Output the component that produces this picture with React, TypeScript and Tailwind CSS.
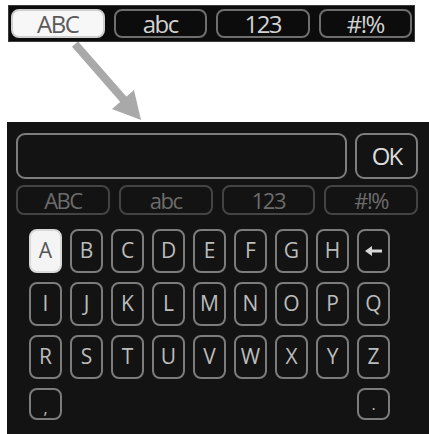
import React from 'react'

const font = { fontFamily: '"Open Sans", "DejaVu Sans", sans-serif' }

const rows: string[][] = [
  ['A', 'B', 'C', 'D', 'E', 'F', 'G', 'H', '←'],
  ['I', 'J', 'K', 'L', 'M', 'N', 'O', 'P', 'Q'],
  ['R', 'S', 'T', 'U', 'V', 'W', 'X', 'Y', 'Z'],
]

const modes = ['ABC', 'abc', '123', '#!%']

const Key: React.FC<{ label: string; active?: boolean }> = ({ label, active }) => {
  if (active) {
    return (
      <div className="h-[44px] rounded-[8px] bg-[#f4f4f4] border-2 border-[#d8d8d8] flex items-center justify-center text-[21px] text-[#555]">
        {label}
      </div>
    )
  }
  if (label === '←') {
    return (
      <div className="h-[44px] rounded-[8px] border-2 border-[#7c7c7c] flex items-center justify-center">
        <svg width="18" height="10" viewBox="0 0 18 10">
          <path d="M0 5 L7 0 L7 3.6 L17 3.6 L17 6.4 L7 6.4 L7 10 Z" fill="#d8d8d8" />
        </svg>
      </div>
    )
  }
  return (
    <div className="h-[44px] rounded-[8px] border-2 border-[#7c7c7c] flex items-center justify-center text-[21px] text-[#bcbcbc]">
      {label}
    </div>
  )
}

export default function App() {
  return (
    <div className="w-[429px] h-[434px] bg-white flex flex-col overflow-hidden" style={font}>
      {/* top mode bar */}
      <div className="ml-[8px] mt-[5px] w-[407px] h-[37px] bg-[#0c0c0c] border border-[#3a3a3a] px-[2px] pt-[3px] grid grid-cols-4 gap-x-[9px]">
        {modes.map((m, i) => (
          <div
            key={m}
            className={
              i === 0
                ? 'h-[29px] rounded-[8px] bg-[#f7f7f7] border-2 border-[#cfcfcf] flex items-center justify-center text-[24px] tracking-[-1.5px] text-[#5a5a5a] leading-none'
                : 'h-[29px] rounded-[8px] border-2 border-[#6e6e6e] flex items-center justify-center text-[24px] tracking-[-1.5px] text-[#d2d2d2] leading-none'
            }
          >
            {m}
          </div>
        ))}
      </div>

      {/* arrow */}
      <svg width="429" height="80" viewBox="0 0 429 80" className="shrink-0">
        <line x1="75" y1="2" x2="124" y2="58" stroke="#a9a9a9" strokeWidth="8" />
        <polygon points="112,67 134,48 141,78" fill="#a9a9a9" />
      </svg>

      {/* keyboard panel */}
      <div className="ml-[7px] flex-1 bg-[#131313] pt-[11px] pl-[9px] pr-[11px] flex flex-col">
        <div className="flex gap-x-[8px] h-[46px]">
          <div className="flex-1 rounded-[9px] border-2 border-[#7e7e7e]" />
          <div className="w-[63px] rounded-[9px] border-2 border-[#7e7e7e] flex items-center justify-center text-[24px] tracking-[-2px] text-[#dcdcdc]">
            OK
          </div>
        </div>

        <div className="mt-[6px] h-[30px] grid grid-cols-4 gap-x-[9px]">
          {modes.map(m => (
            <div
              key={m}
              className="rounded-[8px] border-2 border-[#444] flex items-center justify-center text-[22px] tracking-[-1.5px] text-[#6c6c6c] leading-none"
            >
              {m}
            </div>
          ))}
        </div>

        <div className="mt-[14px] ml-[13px] grid grid-cols-[repeat(9,33px)] gap-x-[8px] gap-y-[9px]">
          {rows.map((r, ri) =>
            r.map((k, ci) => <Key key={ri + '-' + ci} label={k} active={ri === 0 && ci === 0} />)
          )}
          <div className="col-start-1 h-[32px] rounded-[8px] border-2 border-[#7c7c7c] flex items-end justify-center pb-[2px] text-[16px] text-[#bcbcbc] leading-none">
            ,
          </div>
          <div className="col-start-9 h-[32px] rounded-[8px] border-2 border-[#7c7c7c] flex items-end justify-center pb-[6px] text-[16px] text-[#bcbcbc] leading-none">
            .
          </div>
        </div>
      </div>
    </div>
  )
}
